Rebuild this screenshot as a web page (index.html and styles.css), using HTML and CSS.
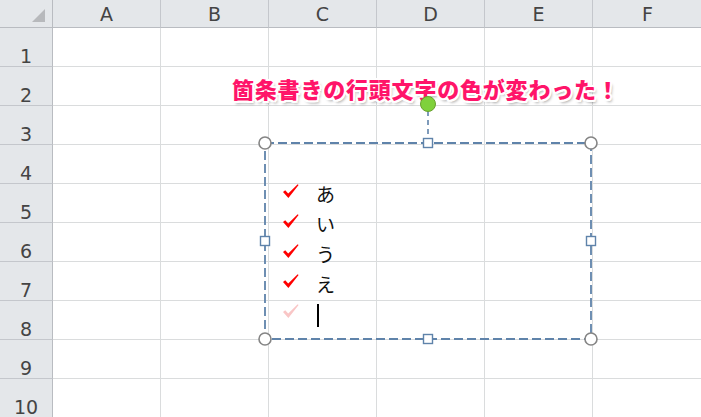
FILE: index.html
```html
<!DOCTYPE html>
<html lang="ja">
<head>
<meta charset="utf-8">
<link rel="stylesheet" href="styles.css">
</head>
<body>
<div class="sheet">
  <div class="grid">
    <div class="corner"><span class="tri"></span></div>
    <div class="ch">A</div><div class="ch">B</div><div class="ch">C</div><div class="ch">D</div><div class="ch">E</div><div class="ch last">F</div>

    <div class="rh">1</div><div class="c"></div><div class="c"></div><div class="c"></div><div class="c"></div><div class="c"></div><div class="c last"></div>
    <div class="rh">2</div><div class="c"></div><div class="c"></div><div class="c"></div><div class="c"></div><div class="c"></div><div class="c last"></div>
    <div class="rh">3</div><div class="c"></div><div class="c"></div><div class="c"></div><div class="c"></div><div class="c"></div><div class="c last"></div>
    <div class="rh">4</div><div class="c"></div><div class="c"></div><div class="c"></div><div class="c"></div><div class="c"></div><div class="c last"></div>
    <div class="rh">5</div><div class="c"></div><div class="c"></div><div class="c"></div><div class="c"></div><div class="c"></div><div class="c last"></div>
    <div class="rh">6</div><div class="c"></div><div class="c"></div><div class="c"></div><div class="c"></div><div class="c"></div><div class="c last"></div>
    <div class="rh">7</div><div class="c"></div><div class="c"></div><div class="c"></div><div class="c"></div><div class="c"></div><div class="c last"></div>
    <div class="rh">8</div><div class="c"></div><div class="c"></div><div class="c"></div><div class="c"></div><div class="c"></div><div class="c last"></div>
    <div class="rh">9</div><div class="c"></div><div class="c"></div><div class="c"></div><div class="c"></div><div class="c"></div><div class="c last"></div>
    <div class="rh">10</div><div class="c"></div><div class="c"></div><div class="c"></div><div class="c"></div><div class="c"></div><div class="c last"></div>
  </div>

  <div class="note">箇条書きの行頭文字の色が変わった！</div>

  <svg class="frame" width="701" height="417" viewBox="0 0 701 417" xmlns="http://www.w3.org/2000/svg">
    <line x1="428" y1="111" x2="428" y2="138" stroke="#5f83aa" stroke-width="1.6" stroke-dasharray="5 4"/>
    <rect x="265" y="143" width="326" height="196" fill="none" stroke="#5f83aa" stroke-width="1.8" stroke-dasharray="9 4"/>
    <circle cx="428" cy="104" r="7.5" fill="#7fd13b" stroke="#6aa030" stroke-width="1"/>
    <circle cx="265" cy="143" r="6" fill="#fff" stroke="#858585" stroke-width="1.6"/>
    <circle cx="591" cy="143" r="6" fill="#fff" stroke="#858585" stroke-width="1.6"/>
    <circle cx="265" cy="339" r="6" fill="#fff" stroke="#858585" stroke-width="1.6"/>
    <circle cx="591" cy="339" r="6" fill="#fff" stroke="#858585" stroke-width="1.6"/>
    <rect x="423.5" y="138.5" width="9" height="9" fill="#fff" stroke="#5f83aa" stroke-width="1.4"/>
    <rect x="423.5" y="334.5" width="9" height="9" fill="#fff" stroke="#5f83aa" stroke-width="1.4"/>
    <rect x="260.5" y="236.5" width="9" height="9" fill="#fff" stroke="#5f83aa" stroke-width="1.4"/>
    <rect x="586.5" y="236.5" width="9" height="9" fill="#fff" stroke="#5f83aa" stroke-width="1.4"/>
  </svg>

  <ul class="bullets">
    <li><svg class="chk" width="16" height="15" viewBox="0 0 16 15"><polygon points="0,8 2.2,6.2 5.2,9.6 14.7,0.2 15.6,1.1 5.4,14" fill="#ff0000"/></svg><span class="txt">あ</span></li>
    <li><svg class="chk" width="16" height="15" viewBox="0 0 16 15"><polygon points="0,8 2.2,6.2 5.2,9.6 14.7,0.2 15.6,1.1 5.4,14" fill="#ff0000"/></svg><span class="txt">い</span></li>
    <li><svg class="chk" width="16" height="15" viewBox="0 0 16 15"><polygon points="0,8 2.2,6.2 5.2,9.6 14.7,0.2 15.6,1.1 5.4,14" fill="#ff0000"/></svg><span class="txt">う</span></li>
    <li><svg class="chk" width="16" height="15" viewBox="0 0 16 15"><polygon points="0,8 2.2,6.2 5.2,9.6 14.7,0.2 15.6,1.1 5.4,14" fill="#ff0000"/></svg><span class="txt">え</span></li>
    <li><svg class="chk" width="16" height="15" viewBox="0 0 16 15"><polygon points="0,8 2.2,6.2 5.2,9.6 14.7,0.2 15.6,1.1 5.4,14" fill="#f9c6c6"/></svg><span class="caret"></span></li>
  </ul>
</div>
</body>
</html>
```

FILE: styles.css
```css
html, body {
  margin: 0;
  padding: 0;
  background: #fff;
}
.sheet {
  position: relative;
  width: 701px;
  height: 417px;
  overflow: hidden;
  font-family: "DejaVu Sans", "Liberation Sans", sans-serif;
}
.grid {
  display: grid;
  grid-template-columns: 53px 108px 108px 108px 108px 108px 109px;
  grid-template-rows: 28px repeat(10, 39px);
}
.corner {
  position: relative;
  background: #e4e7ea;
  border-right: 1px solid #b9bcc1;
  border-bottom: 1px solid #b9bcc1;
  box-sizing: border-box;
}
.tri {
  position: absolute;
  right: 7px;
  bottom: 5px;
  width: 0;
  height: 0;
  border-left: 13px solid transparent;
  border-bottom: 13px solid #b7b9bc;
}
.ch {
  background: #e4e7ea;
  border-right: 1px solid #c4c7cc;
  border-bottom: 1px solid #b9bcc1;
  box-sizing: border-box;
  display: flex;
  align-items: center;
  justify-content: center;
  font-size: 19px;
  line-height: 20px;
  color: #444;
  padding-top: 1px;
}
.rh {
  background: #e4e7ea;
  border-right: 1px solid #b9bcc1;
  border-bottom: 1px solid #c4c7cc;
  box-sizing: border-box;
  display: flex;
  align-items: flex-end;
  justify-content: center;
  font-size: 19px;
  line-height: 18px;
  color: #444;
  padding-bottom: 1px;
}
.c {
  border-right: 1px solid #dadcdd;
  border-bottom: 1px solid #dadcdd;
  box-sizing: border-box;
}
.last {
  border-right: none;
}
.note {
  position: absolute;
  left: 232px;
  top: 73px;
  font-family: "Noto Sans CJK JP", sans-serif;
  font-weight: 900;
  font-size: 22px;
  line-height: 30px;
  letter-spacing: 0.8px;
  color: #ff1469;
  white-space: nowrap;
  text-shadow:
    -1.5px -1.5px 0 #fff, 1.5px -1.5px 0 #fff, -1.5px 1.5px 0 #fff, 1.5px 1.5px 0 #fff,
    0 -2px 0 #fff, 0 2px 0 #fff, -2px 0 0 #fff, 2px 0 0 #fff,
    2px 3px 3px rgba(0,0,0,0.35);
}
.frame {
  position: absolute;
  left: 0;
  top: 0;
}
.bullets {
  position: absolute;
  left: 283px;
  top: 178px;
  margin: 0;
  padding: 0;
  list-style: none;
  display: flex;
  flex-direction: column;
}
.bullets li {
  display: flex;
  align-items: center;
  height: 30px;
}
.chk {
  display: block;
  margin-right: 17px;
  margin-top: -3px;
}
.txt {
  font-family: "Noto Sans CJK JP", sans-serif;
  font-weight: 400;
  font-size: 19px;
  color: #111;
}
.caret {
  width: 2px;
  height: 23px;
  background: #000;
  margin-left: 1px;
  margin-top: 4px;
}
```
